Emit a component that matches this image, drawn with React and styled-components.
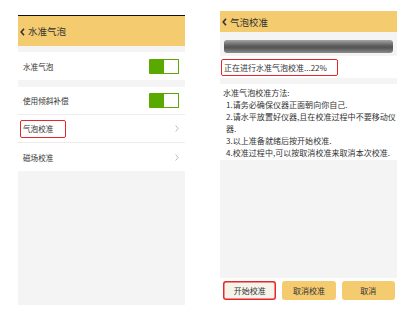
import React from "react";
import styled, { createGlobalStyle } from "styled-components";

// colours
const yellow = "#f5cb70";
const grey_bg = "#f4f4f4";
const green = "#5aa900";
const text = "#333";
const red = "#e7262b";

const GlobalStyle = createGlobalStyle`
  html, body {
    margin: 0;
    background: #fff;
    font-family: "Noto Sans CJK SC", "Noto Sans", sans-serif;
    color: ${text};
  }
`;

const BackIcon = () => (
  <svg width="5" height="8" viewBox="0 0 5 8">
    <polyline points="4,0.8 1.2,4 4,7.2" fill="none" stroke="#333" strokeWidth="1.6" />
  </svg>
);

const ArrowIcon = () => (
  <svg width="4" height="7" viewBox="0 0 4 7">
    <polyline points="0.6,0.5 3.2,3.5 0.6,6.5" fill="none" stroke="#aaa" strokeWidth="0.8" />
  </svg>
);

const Toggle = () => (
  <StyledToggle>
    <span className="on" />
    <span className="off" />
  </StyledToggle>
);

const App = () => {
  const progress = 22;
  const steps = [
    "1.请务必确保仪器正面朝向你自己.",
    "2.请水平放置好仪器,且在校准过程中不要移动仪器.",
    "3.以上准备就绪后按开始校准.",
    "4.校准过程中,可以按取消校准来取消本次校准."
  ];

  return (
    <>
      <GlobalStyle />
      <Page>
        <Phone top={15} topLine height={289}>
          <Header height={30}>
            <BackIcon />
            <span>水准气泡</span>
          </Header>
          <Spacer size={6} />
          <Row>
            <span>水准气泡</span>
            <Toggle />
          </Row>
          <Spacer size={7} />
          <Row divider>
            <span>使用倾斜补偿</span>
            <Toggle />
          </Row>
          <Row divider>
            <Marked className="row-mark">气泡校准</Marked>
            <ArrowIcon />
          </Row>
          <Row>
            <span>磁场校准</span>
            <ArrowIcon />
          </Row>
        </Phone>

        <Phone top={11} height={292}>
          <Header height={21}>
            <BackIcon />
            <span>气泡校准</span>
          </Header>
          <BarWrap>
            <Bar />
          </BarWrap>
          <Status>
            <Marked className="status-mark">正在进行水准气泡校准...{progress}%</Marked>
          </Status>
          <Spacer size={6} />
          <Steps>
            <p>水准气泡校准方法:</p>
            {steps.map(s => (
              <p key={s} className="step">{s}</p>
            ))}
          </Steps>
          <Filler />
          <Buttons>
            <Button light className="marked">开始校准</Button>
            <Button>取消校准</Button>
            <Button>取消</Button>
          </Buttons>
        </Phone>
      </Page>
    </>
  );
};

const Page = styled.main`
  display: flex;
  align-items: flex-start;
  gap: 35px;
  padding-left: 18px;
  width: 413px;
  height: 328px;
  box-sizing: border-box;
`;

const Phone = styled.section`
  margin-top: ${p => p.top}px;
  height: ${p => p.height}px;
  width: ${p => (p.topLine ? 167 : 177)}px;
  background: ${grey_bg};
  border-top: ${p => (p.topLine ? "1px solid #111" : "none")};
  display: flex;
  flex-direction: column;
  flex-shrink: 0;
`;

const Header = styled.header`
  height: ${p => p.height}px;
  background: ${yellow};
  display: flex;
  align-items: center;
  gap: 3px;
  padding-left: 2px;
  font-size: 9.5px;
  flex-shrink: 0;

  svg {
    margin-top: 1px;
  }
`;

const Spacer = styled.div`
  height: ${p => p.size}px;
  flex-shrink: 0;
`;

const Row = styled.div`
  height: 28px;
  box-sizing: border-box;
  background: #fff;
  display: flex;
  align-items: center;
  justify-content: space-between;
  padding: 0 6px 0 5px;
  font-size: 7.6px;
  border-bottom: ${p => (p.divider ? "1px solid #ececec" : "none")};
  flex-shrink: 0;
`;

const Marked = styled.span`
  border: 1.5px solid ${red};
  border-radius: 2px;
  display: inline-flex;
  align-items: center;
  box-sizing: border-box;

  &.row-mark {
    margin-left: -3px;
    padding: 0 12px 0 2px;
    height: 18px;
  }

  &.status-mark {
    margin-left: -2px;
    padding: 0 10px 0 2px;
    height: 17px;
  }
`;

const StyledToggle = styled.div`
  width: 30px;
  height: 15px;
  display: flex;
  border-radius: 1px;
  overflow: hidden;

  .on {
    flex: 1;
    background: ${green};
  }

  .off {
    flex: 1;
    background: #fff;
    border: 1px solid ${green};
    border-left: none;
  }
`;

const BarWrap = styled.div`
  padding: 8px 4px 3px 4px;
  flex-shrink: 0;
`;

const Bar = styled.div`
  height: 13px;
  border-radius: 3px;
  background: linear-gradient(#a5a5a5, #5c5c5c 45%, #555 60%, #8c8c8c);
`;

const Status = styled.div`
  height: 22px;
  background: #fff;
  display: flex;
  align-items: center;
  padding-left: 3px;
  font-size: 8px;
  flex-shrink: 0;
`;

const Steps = styled.div`
  background: #fff;
  padding: 3px 0 1px 3px;
  font-size: 8.05px;
  line-height: 12px;
  flex-shrink: 0;

  p {
    margin: 0;
  }

  .step {
    padding-left: 3px;
  }
`;

const Filler = styled.div`
  flex: 1;
`;

const Buttons = styled.div`
  height: 25px;
  background: #fff;
  display: flex;
  align-items: flex-start;
  gap: 6px;
  padding: 3px 2px 0 3px;
  flex-shrink: 0;
  box-sizing: border-box;
`;

const Button = styled.button`
  flex: 1;
  height: 19px;
  border: none;
  border-radius: 3px;
  background: ${p => (p.light ? "#f6f3ea" : yellow)};
  font-family: inherit;
  font-size: 8px;
  color: ${text};
  padding: 0;

  &.marked {
    box-shadow: inset 0 0 0 1.5px ${red};
  }
`;

export default App;
